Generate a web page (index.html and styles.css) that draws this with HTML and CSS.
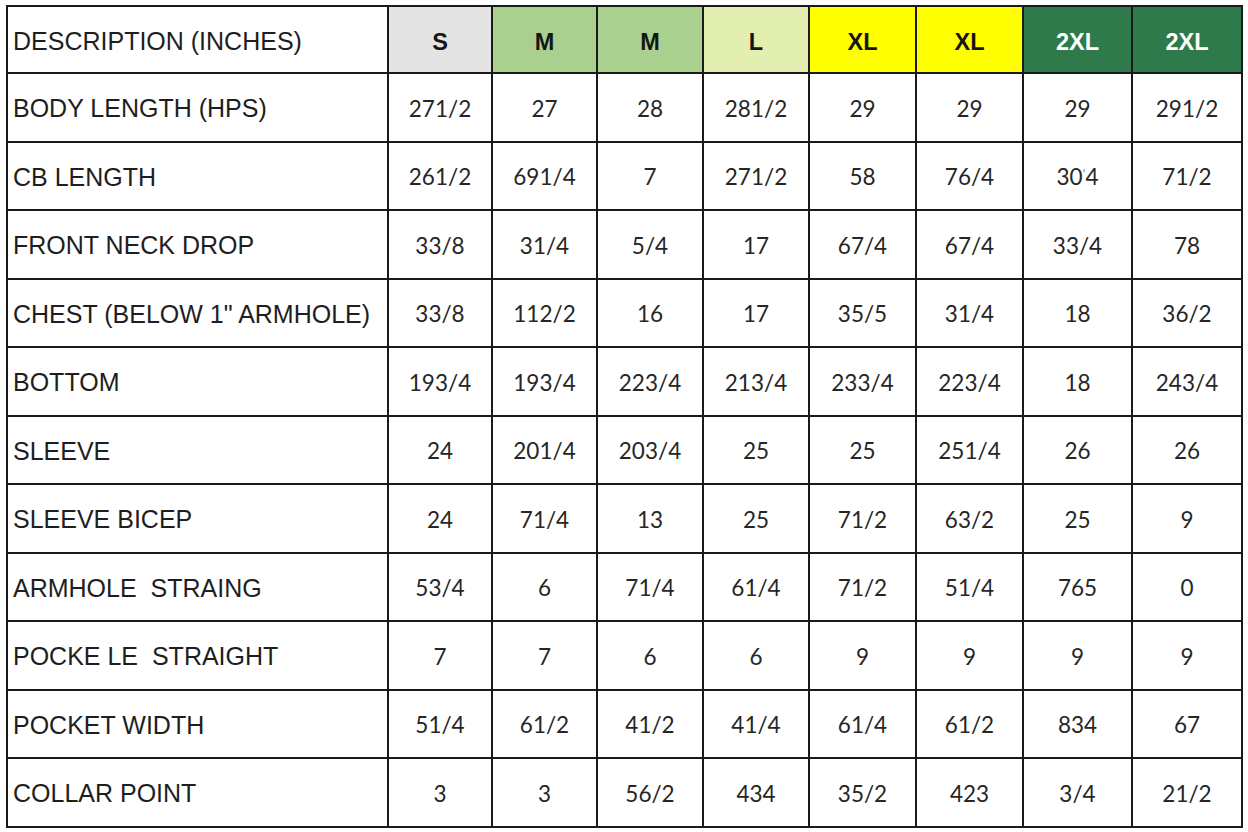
FILE: index.html
```html
<!DOCTYPE html>
<html>
<head>
<meta charset="utf-8">
<link rel="stylesheet" href="styles.css">
</head>
<body>
<table class="sizes">
<colgroup>
<col class="c-desc"><col class="c-s"><col class="c-m1"><col class="c-m2"><col class="c-l"><col class="c-xl1"><col class="c-xl2"><col class="c-2xl1"><col class="c-2xl2">
</colgroup>
<thead>
<tr>
<th class="desc">DESCRIPTION (INCHES)</th>
<th class="sz s">S</th><th class="sz m">M</th><th class="sz m">M</th><th class="sz l">L</th><th class="sz xl">XL</th><th class="sz xl">XL</th><th class="sz xxl">2XL</th><th class="sz xxl">2XL</th>
</tr>
</thead>
<tbody>
<tr><td class="desc">BODY LENGTH (HPS)</td><td>271/2</td><td>27</td><td>28</td><td>281/2</td><td>29</td><td>29</td><td>29</td><td>291/2</td></tr>
<tr><td class="desc">CB LENGTH</td><td>261/2</td><td>691/4</td><td>7</td><td>271/2</td><td>58</td><td>76/4</td><td>30<span class="mark">'</span>4</td><td>71/2</td></tr>
<tr><td class="desc">FRONT NECK DROP</td><td>33/8</td><td>31/4</td><td>5/4</td><td>17</td><td>67/4</td><td>67/4</td><td>33/4</td><td>78</td></tr>
<tr><td class="desc">CHEST (BELOW 1" ARMHOLE)</td><td>33/8</td><td>112/2</td><td>16</td><td>17</td><td>35/5</td><td>31/4</td><td>18</td><td>36/2</td></tr>
<tr><td class="desc">BOTTOM</td><td>193/4</td><td>193/4</td><td>223/4</td><td>213/4</td><td>233/4</td><td>223/4</td><td>18</td><td>243/4</td></tr>
<tr><td class="desc">SLEEVE</td><td>24</td><td>201/4</td><td>203/4</td><td>25</td><td>25</td><td>251/4</td><td>26</td><td>26</td></tr>
<tr><td class="desc">SLEEVE BICEP</td><td>24</td><td>71/4</td><td>13</td><td>25</td><td>71/2</td><td>63/2</td><td>25</td><td>9</td></tr>
<tr><td class="desc">ARMHOLE&nbsp; STRAING</td><td>53/4</td><td>6</td><td>71/4</td><td>61/4</td><td>71/2</td><td>51/4</td><td>765</td><td>0</td></tr>
<tr><td class="desc">POCKE LE&nbsp; STRAIGHT</td><td>7</td><td>7</td><td>6</td><td>6</td><td>9</td><td>9</td><td>9</td><td>9</td></tr>
<tr><td class="desc">POCKET WIDTH</td><td>51/4</td><td>61/2</td><td>41/2</td><td>41/4</td><td>61/4</td><td>61/2</td><td>834</td><td>67</td></tr>
<tr><td class="desc">COLLAR POINT</td><td>3</td><td>3</td><td>56/2</td><td>434</td><td>35/2</td><td>423</td><td>3/4</td><td>21/2</td></tr>
</tbody>
</table>
</body>
</html>
```
FILE: styles.css
```css
html, body {
  margin: 0;
  padding: 0;
  background: #ffffff;
}
body {
  padding: 5px 0 0 6px;
}
.sizes {
  border-collapse: collapse;
  table-layout: fixed;
  width: 1235px;
  border: 2px solid #1a1a1a;
}
.c-desc { width: 381px; }
.c-s { width: 104px; }
.c-m1 { width: 105px; }
.c-m2 { width: 106px; }
.c-l { width: 106px; }
.c-xl1 { width: 107px; }
.c-xl2 { width: 107px; }
.c-2xl1 { width: 109px; }
.c-2xl2 { width: 110px; }
.sizes th, .sizes td {
  border: 2px solid #1a1a1a;
  padding: 0;
  vertical-align: middle;
  text-align: center;
}
.sizes thead tr { height: 67px; }
.sizes tbody tr { height: 68.5px; }
.sizes td {
  font-family: Lato, "Open Sans", sans-serif;
  font-size: 22.5px;
  color: #262626;
  padding-top: 2px;
}
.sizes .desc {
  text-align: left;
  padding-left: 5px;
  padding-top: 3px;
  font-family: "Liberation Sans", Arial, sans-serif;
  font-size: 25px;
  font-weight: normal;
  color: #1e1e1e;
  white-space: nowrap;
}
.sizes .sz {
  font-family: "Liberation Sans", Arial, sans-serif;
  font-weight: bold;
  font-size: 23.5px;
  color: #151515;
  padding-top: 6px;
}
.s { background: #e4e4e4; }
.m { background: #a9d08e; }
.l { background: #e3eeb1; }
.xl { background: #ffff00; }
.sizes .xxl { background: #2f7a4b; color: #ffffff; }
.mark {
  color: #6a90c0;
  font-size: 14px;
  vertical-align: 6px;
}
```
